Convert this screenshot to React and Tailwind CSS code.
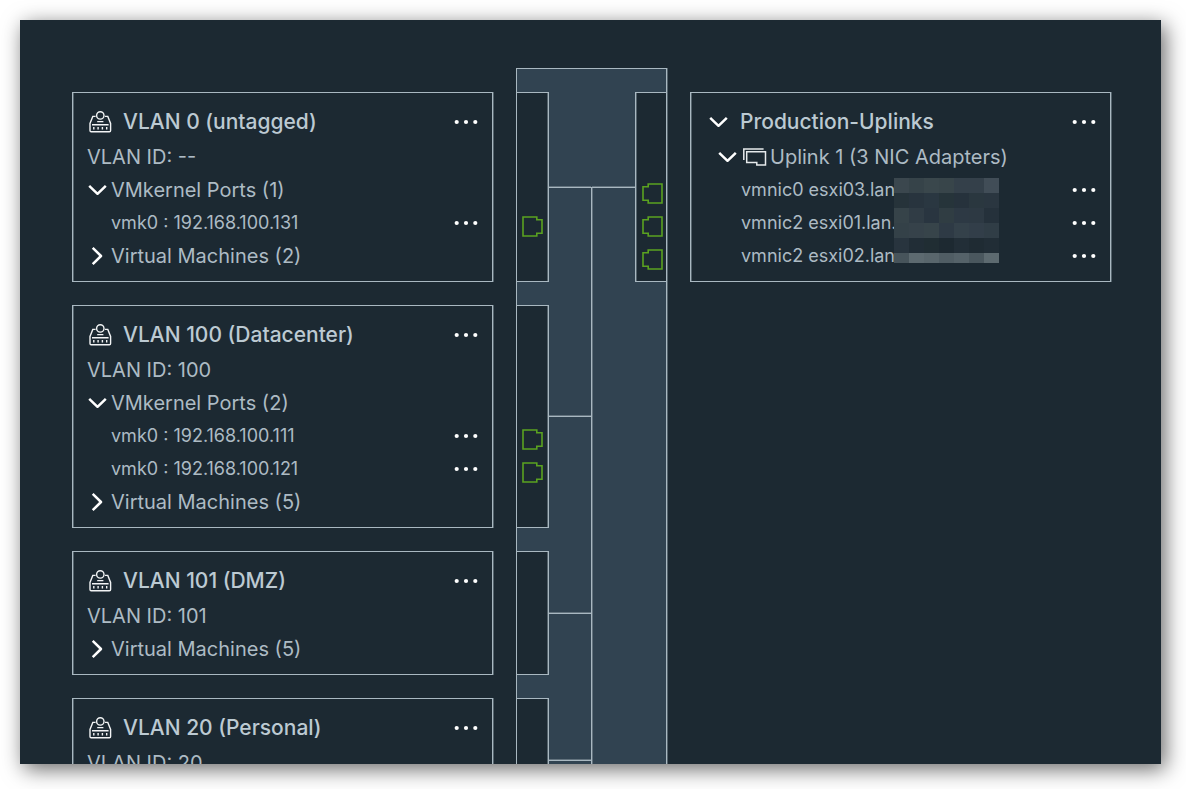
import React, { useState } from "react";

const groups = [
  { title: "VLAN 0 (untagged)", id: "--", ports: ["vmk0 : 192.168.100.131"], vms: 2 },
  {
    title: "VLAN 100 (Datacenter)",
    id: "100",
    ports: ["vmk0 : 192.168.100.111", "vmk0 : 192.168.100.121"],
    vms: 5,
  },
  { title: "VLAN 101 (DMZ)", id: "101", ports: [], vms: 5 },
  { title: "VLAN 20 (Personal)", id: "20", ports: [], vms: null },
];

const adapters = ["vmnic0 esxi03.lan", "vmnic2 esxi01.lan.", "vmnic2 esxi02.lan"];

const mosaic = [
  ["#3b474e", "#364349", "#3a474c", "#38454a", "#34404a", "#34404a", "#414d57"],
  ["#26333a", "#28343e", "#2a3741", "#26343a", "#26323c", "#2a373f", "#2a3640"],
  ["#364349", "#303c45", "#293540", "#303d43", "#2d3944", "#2d3943", "#25313b"],
  ["#344148", "#36424a", "#37444a", "#2e3a45", "#34414a", "#323e49", "#303d46"],
  ["#28343e", "#212d36", "#202d33", "#1d2931", "#222e37", "#1f2b33", "#212d36"],
  ["#47545b", "#5d6a70", "#59666c", "#505d64", "#556269", "#4a575e", "#5d6a70"],
];

function NetworkIcon() {
  return (
    <svg className="h-6 w-[26px] shrink-0" viewBox="0 0 26 24" fill="none" stroke="#f2f4f5" strokeWidth="1.4" aria-hidden="true">
      <circle cx="13.3" cy="5.4" r="3.7" />
      <path d="M8.6 6.4H5.8L3 13.4V20.6Q3 21.8 4.2 21.8H22.4Q23.6 21.8 23.6 20.6V13.4L20.8 6.4H18" />
      <path d="M10.2 11.6H16.4M5 14.8H21.6" />
      <path d="M6.8 17V19.6M11.1 17V19.6M15.4 17V19.6M19.7 17V19.6" />
    </svg>
  );
}

function UplinkIcon() {
  return (
    <svg className="h-[18px] w-6 shrink-0" viewBox="0 0 24 18" fill="none" stroke="#e6eaec" strokeWidth="1.5" aria-hidden="true">
      <path d="M.8 12V.9H20.6" />
      <path d="M3.7 3.7H22.5V17H13.8V14.5H3.7Z" />
    </svg>
  );
}

function PortIcon({ flip }) {
  return (
    <svg className="h-[21px] w-[21px]" viewBox="0 0 21 21" fill="none" stroke="#5aa220" strokeWidth="1.6" aria-hidden="true">
      <path
        d={
          flip
            ? "M20 1H6.2V3.7H1V17.3H6.2V20H20Z"
            : "M1 1H14.8V3.7H20V17.3H14.8V20H1Z"
        }
      />
    </svg>
  );
}

function Toggle({ label, open: initial }) {
  const [open, setOpen] = useState(initial);
  return (
    <button type="button" aria-label={label} aria-expanded={open} onClick={() => setOpen(!open)} className="flex h-5 w-5 shrink-0 items-center justify-center">
      <svg className="h-5 w-5" viewBox="0 0 20 20" fill="none" stroke="#fff" strokeWidth="2.5" strokeLinejoin="round" aria-hidden="true">
        <path d={open ? "M2.2 5.8L10.5 13.8L18.8 5.8" : "M5.7 1.8L14 10L5.7 18.2"} />
      </svg>
    </button>
  );
}

function MenuButton({ label }) {
  return (
    <button type="button" aria-label={"Actions for " + label} className="ml-auto flex h-5 w-6 shrink-0 items-center">
      <svg className="h-[6px] w-6" viewBox="0 0 24 6" fill="#fff" aria-hidden="true">
        <circle cx="2.7" cy="3" r="2.1" />
        <circle cx="12" cy="3" r="2.1" />
        <circle cx="21.3" cy="3" r="2.1" />
      </svg>
    </button>
  );
}

const card = "border border-[#a9b8c1] pt-3 pb-[9px] shadow-[1px_0_0_#56656e,inset_1px_0_0_#56656e]";

function GroupCard({ group }) {
  return (
    <section className={card + " min-h-[124px] pl-[14px] pr-[14px]"}>
      <div className="flex h-[35px] items-center pb-[2px]">
        <NetworkIcon />
        <h2 className="ml-[10px] text-[21px] font-medium text-[#bccad2]">{group.title}</h2>
        <MenuButton label={group.title} />
      </div>
      <div className="flex h-[33px] items-center">VLAN ID: {group.id}</div>
      {group.ports.length > 0 && (
        <>
          <div className="flex h-[33px] items-center gap-1">
            <Toggle label="VMkernel Ports" open />
            <span>VMkernel Ports ({group.ports.length})</span>
          </div>
          {group.ports.map((port) => (
            <div key={port} className="flex h-[33px] items-center pl-6 text-[18px]">
              {port}
              <MenuButton label={port} />
            </div>
          ))}
        </>
      )}
      {group.vms !== null && (
        <div className="flex h-[33px] items-center gap-1">
          <Toggle label="Virtual Machines" open={false} />
          <span>Virtual Machines ({group.vms})</span>
        </div>
      )}
    </section>
  );
}

function GroupSlot({ group }) {
  return (
    <div className="flex items-center">
      <div className="min-h-[124px] w-8 border border-l-0 border-[#a9b8c1] bg-[#1c2932] pt-3 pb-[9px] shadow-[inset_-1px_0_0_#56656e]">
        <div className="h-[35px]" />
        <div className="h-[33px]" />
        {group.ports.length > 0 && <div className="h-[33px]" />}
        {group.ports.map((port) => (
          <div key={port} className="flex h-[33px] items-end pb-[2px] pl-[5px]">
            <PortIcon />
          </div>
        ))}
        {group.vms !== null && <div className="h-[33px]" />}
      </div>
      <div className="h-px flex-1 bg-[#a9b8c1] shadow-[0_-1px_0_#63737e]" />
    </div>
  );
}

function Switch() {
  return (
    <div className="-mt-6 flex border border-b-0 border-[#a9b8c1] bg-[#314351] pt-[23px] shadow-[1px_0_0_#56656e]">
      <div className="flex flex-1 flex-col gap-[23px]">
        {groups.map((g) => (
          <GroupSlot key={g.title} group={g} />
        ))}
      </div>
      <div className="mt-[95px] w-px bg-[#a9b8c1] shadow-[1px_0_0_#63737e]" />
      <div className="flex-1">
        <div className="flex items-center">
          <div className="h-px flex-1 bg-[#a9b8c1] shadow-[0_-1px_0_#63737e]" />
          <div className="w-[31px] border border-r-0 border-[#a9b8c1] bg-[#1c2932] pt-3 pb-[9px] shadow-[inset_1px_0_0_#56656e]">
            <div className="h-[35px]" />
            <div className="h-[33px]" />
            {adapters.map((a) => (
              <div key={a} className="flex h-[33px] items-end pb-[2px] pl-[6px]">
                <PortIcon flip />
              </div>
            ))}
          </div>
        </div>
      </div>
    </div>
  );
}

function UplinkCard() {
  return (
    <section className={card + " self-start pl-[17px] pr-[14px]"}>
      <div className="flex h-[35px] items-center pb-[2px]">
        <Toggle label="Production-Uplinks" open />
        <h2 className="ml-3 text-[21px] font-medium text-[#bccad2]">Production-Uplinks</h2>
        <MenuButton label="Production-Uplinks" />
      </div>
      <div className="flex h-[33px] items-center pl-[9px]">
        <Toggle label="Uplink 1" open />
        <div className="ml-[6px] flex items-center gap-[3px]">
          <UplinkIcon />
          <span>Uplink 1 (3 NIC Adapters)</span>
        </div>
      </div>
      <div className="relative pl-[33px] text-[18px]">
        {adapters.map((a) => (
          <div key={a} className="flex h-[33px] items-center">
            {a}
            <MenuButton label={a} />
          </div>
        ))}
        <div aria-hidden="true" className="absolute left-[186px] top-[5px] h-[85px] w-[105px] overflow-hidden">
          {mosaic.map((row, y) => (
            <div key={y} className="flex h-[15px]">
              {row.map((c, x) => (
                <div key={x} className="w-[15px]" style={{ backgroundColor: c }} />
              ))}
            </div>
          ))}
        </div>
      </div>
    </section>
  );
}

export default function App() {
  return (
    <div className="h-screen bg-white pt-5 pr-[25px] pb-[25px] pl-5 font-['Inter',sans-serif] text-[20px] whitespace-nowrap text-[#adbbc4]">
      <main className="grid h-full grid-cols-[1fr_151px_1fr] items-start gap-[23px] overflow-hidden bg-[#1c2932] pt-[72px] pr-[50px] pl-[52px] shadow-[4px_5px_20px_rgba(0,0,0,0.6)]">
        <div className="flex flex-col gap-[23px]">
          {groups.map((g) => (
            <GroupCard key={g.title} group={g} />
          ))}
        </div>
        <Switch />
        <UplinkCard />
      </main>
    </div>
  );
}
